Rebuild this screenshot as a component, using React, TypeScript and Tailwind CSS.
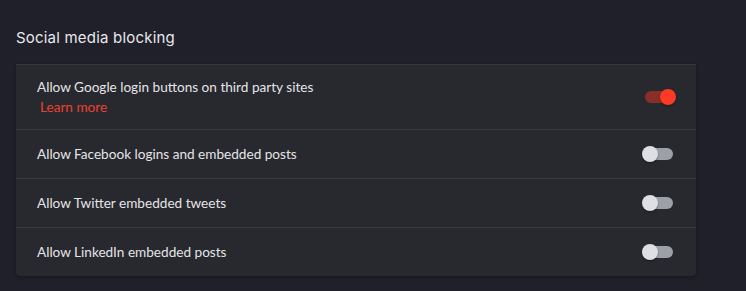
import { useState } from "react";

interface RowProps {
    label: string;
    learnMore?: boolean;
    on: boolean;
    onToggle: () => void;
}

const Toggle = ({ on, onToggle }: { on: boolean; onToggle: () => void }) => (
    <button
        type="button"
        onClick={onToggle}
        className="relative w-[34px] h-4 shrink-0"
        aria-pressed={on}
    >
        <span
            className={`absolute left-[3px] right-[3px] top-[2px] h-3 rounded-full ${on ? "bg-[#8a2f28]" : "bg-[#9da0a7]"}`}
        />
        <span
            className={`absolute top-0 w-4 h-4 rounded-full shadow-[0_1px_2px_rgba(0,0,0,0.4)] ${on ? "left-[18px] bg-[#fb3b25]" : "left-0 bg-[#dedfe3]"}`}
        />
    </button>
);

const Row = ({ label, learnMore, on, onToggle }: RowProps) => (
    <div
        className={`flex items-center justify-between pl-[21px] pr-[20px] border-t border-[#3a3b3f] first:border-t-0 ${learnMore ? "h-[64px]" : "h-[49px]"}`}
    >
        <div className="flex flex-col">
            <span className="text-[13.6px] text-[#e4e4e7] leading-[18px]">
                {label}
            </span>
            {learnMore && (
                <a className="text-[13.6px] text-[#e8412f] leading-[18px] mt-[2px] ml-[3px] cursor-pointer">
                    Learn more
                </a>
            )}
        </div>
        <Toggle on={on} onToggle={onToggle} />
    </div>
);

const App = () => {
    const [state, setState] = useState([true, false, false, false]);
    const rows = [
        { label: "Allow Google login buttons on third party sites", learnMore: true },
        { label: "Allow Facebook logins and embedded posts" },
        { label: "Allow Twitter embedded tweets" },
        { label: "Allow LinkedIn embedded posts" },
    ];
    return (
        <div
            className="min-h-[291px] bg-[#1f2029] pt-[28px] pl-4 w-[746px]"
            style={{ fontFamily: "Lato, 'Open Sans', sans-serif" }}
        >
            <h2
                className="text-[15px] text-[#e8e8ec] leading-5 mb-[16px] tracking-[0.2px]"
                style={{ fontFamily: "Inter, 'Noto Sans', sans-serif" }}
            >
                Social media blocking
            </h2>
            <div className="w-[680px] bg-[#28292e] rounded-b-[4px] border-t border-[#38393d] shadow-[0_1px_3px_rgba(0,0,0,0.35)]">
                {rows.map((r, i) => (
                    <Row
                        key={r.label}
                        label={r.label}
                        learnMore={r.learnMore}
                        on={state[i]}
                        onToggle={() =>
                            setState((s) => s.map((v, j) => (j === i ? !v : v)))
                        }
                    />
                ))}
            </div>
        </div>
    );
};

export default App;
